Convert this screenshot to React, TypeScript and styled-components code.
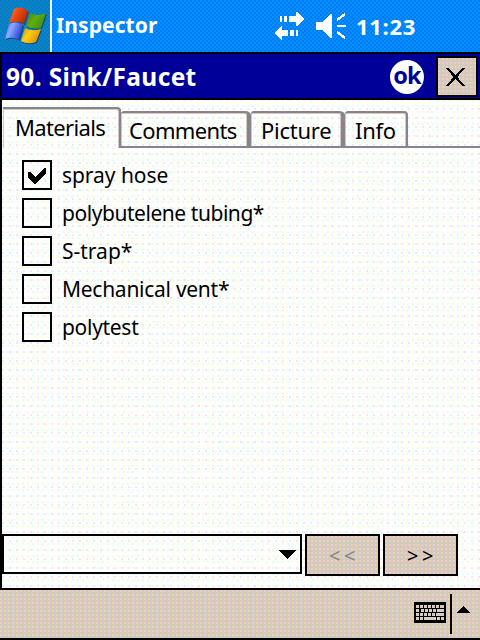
import React from 'react';
import styled, { createGlobalStyle, css } from 'styled-components';

const Global = createGlobalStyle`
  * { box-sizing: border-box; }
  html, body { margin: 0; padding: 0; }
  body { font-family: "Noto Sans", "Liberation Sans", sans-serif; color: #000; }
`;

const dither = (a: string, b: string, size = 4) => css`
  background: repeating-conic-gradient(${a} 0 25%, ${b} 0 50%) 0 0 / ${size}px ${size}px;
`;
const speckle = css`
  background:
    radial-gradient(circle at 1px 1px, #f9e2fb 0.8px, transparent 0.9px) 0 0 / 7px 9px,
    radial-gradient(circle at 3px 3px, #ffffdc 0.8px, transparent 0.9px) 0 0 / 6px 5px,
    radial-gradient(circle at 1px 4px, #deffff 0.8px, transparent 0.9px) 0 0 / 5px 6px,
    #fff;
`;
const tan = css`
  background:
    radial-gradient(circle at 1px 1px, #f4cbb6 0.8px, transparent 0.9px) 0 0 / 4px 4px,
    radial-gradient(circle at 3px 3px, #d3cc9f 0.8px, transparent 0.9px) 1px 0 / 6px 4px,
    #d0cac9;
`;

const Screen = styled.div`
  width: 480px;
  height: 640px;
  display: flex;
  flex-direction: column;
  overflow: hidden;
`;
const StatusBar = styled.header`
  height: 52px;
  flex: none;
  display: flex;
  color: #fff;
  ${dither('#0078fb', '#0094fb', 4)}
`;
const StartButton = styled.div`
  width: 52px;
  border-right: 2px solid #fff;
  ${dither('#0a88bc', '#0878ce', 4)}
`;
const Text = styled.span<{ $size?: number; $track?: number; $bold?: boolean }>`
  font-size: ${p => p.$size ?? 21}px;
  letter-spacing: ${p => p.$track ?? 0}px;
  font-weight: ${p => (p.$bold ? 700 : 400)};
  line-height: 30px;
  white-space: nowrap;
`;
const StatusTitle = styled.div`
  flex: 1;
  padding: 10px 0 0 4px;
`;
const StatusTray = styled.div`
  display: flex;
  width: 206px;
  align-items: flex-start;
`;
const Clock = styled.div`
  padding: 11px 0 0 8px;
`;
const Window = styled.main`
  height: 538px;
  flex: none;
  border: solid #000;
  border-width: 2px 0 2px 2px;
  display: flex;
  flex-direction: column;
  ${speckle}
`;
const TitleBar = styled.div`
  height: 46px;
  flex: none;
  background: #000098;
  border-bottom: 2px solid #000;
  color: #fff;
  display: flex;
  padding: 2px 2px 0 4px;
`;
const Title = styled.div`
  flex: 1;
  padding-top: 6px;
`;
const OkButton = styled.div`
  width: 34px;
  height: 34px;
  margin: 4px 12px 0 0;
  border-radius: 50%;
  background: #fff;
  color: #000098;
  display: flex;
  justify-content: center;
  line-height: 30px;
`;
const CloseButton = styled.div`
  width: 42px;
  height: 41px;
  border: 2px solid #000;
  ${tan}
`;
const TabBar = styled.div`
  height: 41px;
  margin: 7px 0 0 1px;
  display: flex;
  align-items: flex-end;
  flex: none;
`;
const Tab = styled.div<{ $w: number; $edge?: number; $active?: boolean; $pad: number }>`
  width: ${p => p.$w}px;
  height: ${p => (p.$active ? 41 : 37)}px;
  padding: ${p => (p.$active ? 3 : 2)}px 0 0 ${p => p.$pad}px;
  border: solid #85858a;
  border-width: 2px ${p => p.$edge ?? 2}px ${p => (p.$active ? 0 : 2)}px 0;
  border-top-right-radius: ${p => (p.$edge ?? 2) + 2}px 4px;
  border-top-left-radius: ${p => (p.$active ? 0 : 3)}px;
  box-shadow: inset -1px 1px #d7c6c3, inset 1px 0 #d7c6c3;
`;
const TabRule = styled.div`
  flex: 1;
  height: 2px;
  background: #85858a;
`;
const Checklist = styled.div`
  flex: 1;
  display: flex;
  flex-direction: column;
  gap: 8px;
  padding: 12px 0 0 20px;
`;
const Item = styled.label`
  display: flex;
  gap: 10px;
  height: 30px;
`;
const Box = styled.span`
  width: 30px;
  height: 30px;
  border: 2px solid #000;
`;
const Controls = styled.div`
  display: flex;
  height: 54px;
  flex: none;
`;
const Combo = styled.div`
  width: 300px;
  height: 40px;
  border: 2px solid #000;
  margin-right: 3px;
  display: flex;
  justify-content: flex-end;
  padding: 14px 4px 0 0;
`;
const NavButton = styled.button<{ $disabled?: boolean }>`
  width: 75px;
  height: 42px;
  margin: 0 3px 0 0;
  padding: 1px 0 0 3px;
  border: 2px solid #000;
  border-radius: 0;
  color: ${p => (p.$disabled ? '#858588' : '#000')};
  font-family: inherit;
  display: flex;
  justify-content: center;
  align-items: center;
  ${tan}
`;
const BottomBar = styled.footer`
  height: 50px;
  flex: none;
  border-bottom: 2px solid #000;
  display: flex;
  justify-content: flex-end;
  ${tan}
`;
const KeyboardSlot = styled.div`
  padding: 12px 4px 0 0;
`;
const Divider = styled.div`
  width: 2px;
  height: 40px;
  margin-top: 4px;
  background: #000;
`;
const ArrowSlot = styled.div`
  width: 28px;
  padding: 16px 0 0 4px;
`;
const Svg = styled.svg`
  display: block;
  flex: none;
`;

const StartLogo = () => (
  <Svg width="50" height="52" viewBox="0 0 50 52">
    <defs>
      <linearGradient id="red" x2="1" y2=".5"><stop stopColor="#ff8a45" /><stop offset=".45" stopColor="#f04c10" /><stop offset="1" stopColor="#b52c08" /></linearGradient>
      <linearGradient id="green" x2="1" y2=".5"><stop stopColor="#3b7c12" /><stop offset=".5" stopColor="#62ad10" /><stop offset="1" stopColor="#3d9210" /></linearGradient>
      <linearGradient id="blue" x2="1" y2=".4"><stop stopColor="#2d55dd" /><stop offset=".4" stopColor="#91a9ff" /><stop offset="1" stopColor="#2445d2" /></linearGradient>
      <linearGradient id="gold" x2="1" y2=".5"><stop stopColor="#a88916" /><stop offset=".45" stopColor="#ffd018" /><stop offset="1" stopColor="#d99100" /></linearGradient>
    </defs>
    <g fill="#13487c" transform="translate(1 1)">
      <path d="M14 9Q20 5 28 11L24 24Q17 20 9 23Z" />
      <path d="M30 13Q37 17 46 13L41 28Q33 30 26 26Z" />
      <path d="M9 24Q16 20 23 25L19 40Q12 36 5 39Z" />
      <path d="M25 28Q32 32 41 29L36 42Q28 45 21 41Z" />
    </g>
    <path d="M14 9Q20 5 28 11L24 24Q17 20 9 23Z" fill="url(#red)" />
    <path d="M30 13Q37 17 46 13L41 28Q33 30 26 26Z" fill="url(#green)" />
    <path d="M9 24Q16 20 23 25L19 40Q12 36 5 39Z" fill="url(#blue)" />
    <path d="M25 28Q32 32 41 29L36 42Q28 45 21 41Z" fill="url(#gold)" />
  </Svg>
);

const TrayIcons = () => (
  <Svg width="74" height="52" viewBox="274 0 74 52" fill="#fff" shapeRendering="crispEdges">
    <path d="M280 16h2v6h-2zM284 16h3v6h-3zM289 16h7v-4h2l6 7-6 7h-2v-4h-7z" />
    <path d="M274 33l7-7h1v4h6v6h-6v4h-1zM290 30h4v6h-4zM296 30h2v6h-2z" />
    <path d="M316 22h6l8-8h2v24h-2l-8-8h-6z" />
    <path d="M337 20l8-6M337 26h9M337 32l8 6" fill="none" stroke="#fff" strokeWidth="2.4" />
  </Svg>
);

const Keyboard = () => {
  const rows = [[0, 4, 8, 12, 16, 20, 24], [0, 5, 9, 13, 17, 21], [0, 4, 8, 12, 16, 20]];
  return (
    <Svg width="32" height="21" viewBox="0 0 32 21" shapeRendering="crispEdges">
      <rect width="32" height="21" rx="1.5" />
      <g fill="#d7ccc4">
        {rows.map((r, y) => r.map((x, i) => (
          <rect key={`${y}-${x}`} x={x + 2} y={3 + y * 4} width={i === r.length - 1 ? 28 - x : 3} height="3" />
        )))}
        <path d="M2 15h3v3H2zM6 15h3v3H6zM10 15h12v3H10zM23 15h3v3h-3zM27 15h3v3h-3z" />
      </g>
    </Svg>
  );
};

const items = [
  { label: 'spray hose', track: -0.05, checked: true },
  { label: 'polybutelene tubing*', track: -0.45 },
  { label: 'S-trap*', track: 0 },
  { label: 'Mechanical vent*', track: -0.27 },
  { label: 'polytest', track: -0.3 },
];

export default function App() {
  return (
    <Screen>
      <Global />
      <StatusBar>
        <StartButton><StartLogo /></StartButton>
        <StatusTitle><Text $bold $track={0.1}>Inspector</Text></StatusTitle>
        <StatusTray>
          <TrayIcons />
          <Clock><Text $bold $size={22} $track={0.7}>11:23</Text></Clock>
        </StatusTray>
      </StatusBar>
      <Window>
        <TitleBar>
          <Title><Text $bold $size={24.5} $track={0.35}>90. Sink/Faucet</Text></Title>
          <OkButton><Text $bold $size={23.5} $track={-0.8}>ok</Text></OkButton>
          <CloseButton>
            <Svg width="38" height="37" viewBox="438 58 38 37" shapeRendering="crispEdges">
              <path d="M447 68L464 86M464 68L447 86" stroke="#000" strokeWidth="2.4" fill="none" />
            </Svg>
          </CloseButton>
        </TitleBar>
        <TabBar>
          <Tab $w={118} $pad={12} $active><Text $size={22} $track={-0.65}>Materials</Text></Tab>
          <Tab $w={130} $edge={4} $pad={8}><Text $size={22} $track={-0.65}>Comments</Text></Tab>
          <Tab $w={94} $edge={4} $pad={10}><Text $size={22} $track={-0.25}>Picture</Text></Tab>
          <Tab $w={63} $pad={10}><Text $size={22} $track={-0.3}>Info</Text></Tab>
          <TabRule />
        </TabBar>
        <Checklist>
          {items.map(it => (
            <Item key={it.label}>
              <Box>
                {it.checked && (
                  <Svg width="26" height="26" viewBox="24 162 26 26" shapeRendering="crispEdges">
                    <path d="M28 172h2l5 5 9-9h2v5L36 184h-2l-6-7z" />
                  </Svg>
                )}
              </Box>
              <Text $track={it.track}>{it.label}</Text>
            </Item>
          ))}
        </Checklist>
        <Controls>
          <Combo>
            <Svg width="17" height="9" viewBox="0 0 17 9" shapeRendering="crispEdges"><path d="M0 0h17L8.500 9z" /></Svg>
          </Combo>
          <NavButton $disabled><Text $size={20} $track={3.5}>&lt;&lt;</Text></NavButton>
          <NavButton><Text $size={20} $track={3.5}>&gt;&gt;</Text></NavButton>
        </Controls>
      </Window>
      <BottomBar>
        <KeyboardSlot><Keyboard /></KeyboardSlot>
        <Divider />
        <ArrowSlot>
          <Svg width="14" height="7" viewBox="0 0 14 7" shapeRendering="crispEdges"><path d="M0 7h14L7 0z" /></Svg>
        </ArrowSlot>
      </BottomBar>
    </Screen>
  );
}
